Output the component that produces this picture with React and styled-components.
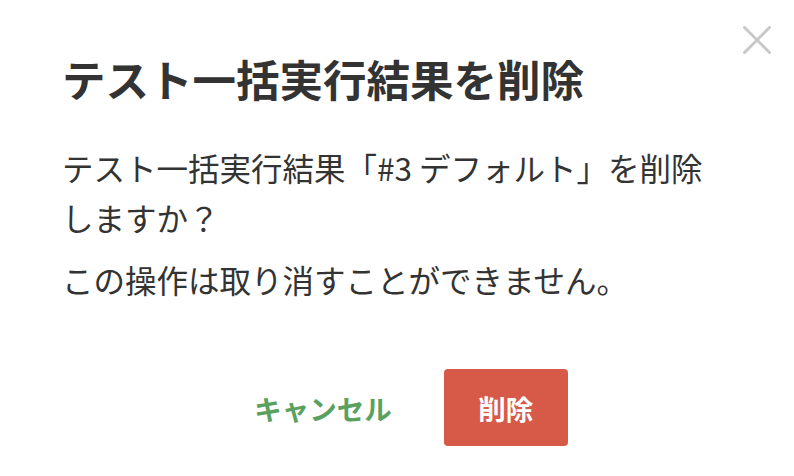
import React from 'react'
import styled, { createGlobalStyle } from 'styled-components'

const GlobalStyle = createGlobalStyle`
html, body {
    margin:0;
    padding:0;
    background:#fff;
}
body {
    font-family:"Noto Sans CJK JP", "Noto Sans", sans-serif;
    color:#333;
}
`

function App() {
    return (
        <>
            <GlobalStyle />
            <Dialog>
                <CloseButton aria-label="close">
                    <svg width="28" height="28" viewBox="0 0 28 28">
                        <path d="M1.5 1.5 L26.5 26.5 M26.5 1.5 L1.5 26.5" stroke="#c8c8c8" strokeWidth="3" strokeLinecap="square" fill="none" />
                    </svg>
                </CloseButton>
                <Title>テスト一括実行結果を削除</Title>
                <Body>
                    <Paragraph>テスト一括実行結果「#3 デフォルト」を削除しますか？</Paragraph>
                    <Paragraph>この操作は取り消すことができません。</Paragraph>
                </Body>
                <Footer>
                    <CancelButton>キャンセル</CancelButton>
                    <DeleteButton>削除</DeleteButton>
                </Footer>
            </Dialog>
        </>
    )
}

const Dialog = styled.div`
position:relative;
width:794px;
height:476px;
box-sizing:border-box;
padding:52px 62px 0 62px;
background:#fff;
`
const CloseButton = styled.button`
position:absolute;
top:26px;
right:23px;
width:28px;
height:28px;
padding:0;
border:none;
background:none;
cursor:pointer;
svg{
    display:block;
}
`
const Title = styled.h2`
margin:0;
font-size:43.5px;
line-height:54px;
font-weight:700;
color:#333;
`
const Body = styled.div`
margin-top:36px;
width:660px;
`
const Paragraph = styled.p`
margin:0 0 12px 0;
font-size:31.5px;
line-height:50px;
font-weight:400;
color:#333;
`
const Footer = styled.div`
display:flex;
justify-content:center;
align-items:center;
gap:18px;
margin-top:65px;
margin-left:-62px;
margin-right:-56px;
`
const CancelButton = styled.button`
font-family:inherit;
font-size:27.5px;
font-weight:700;
color:#5aa05e;
background:none;
border:none;
padding:0 34px;
height:77px;
cursor:pointer;
`
const DeleteButton = styled.button`
font-family:inherit;
font-size:27.5px;
font-weight:700;
color:#fff;
background:#d75a48;
border:none;
border-radius:4px;
width:124px;
height:77px;
cursor:pointer;
`

export default App
